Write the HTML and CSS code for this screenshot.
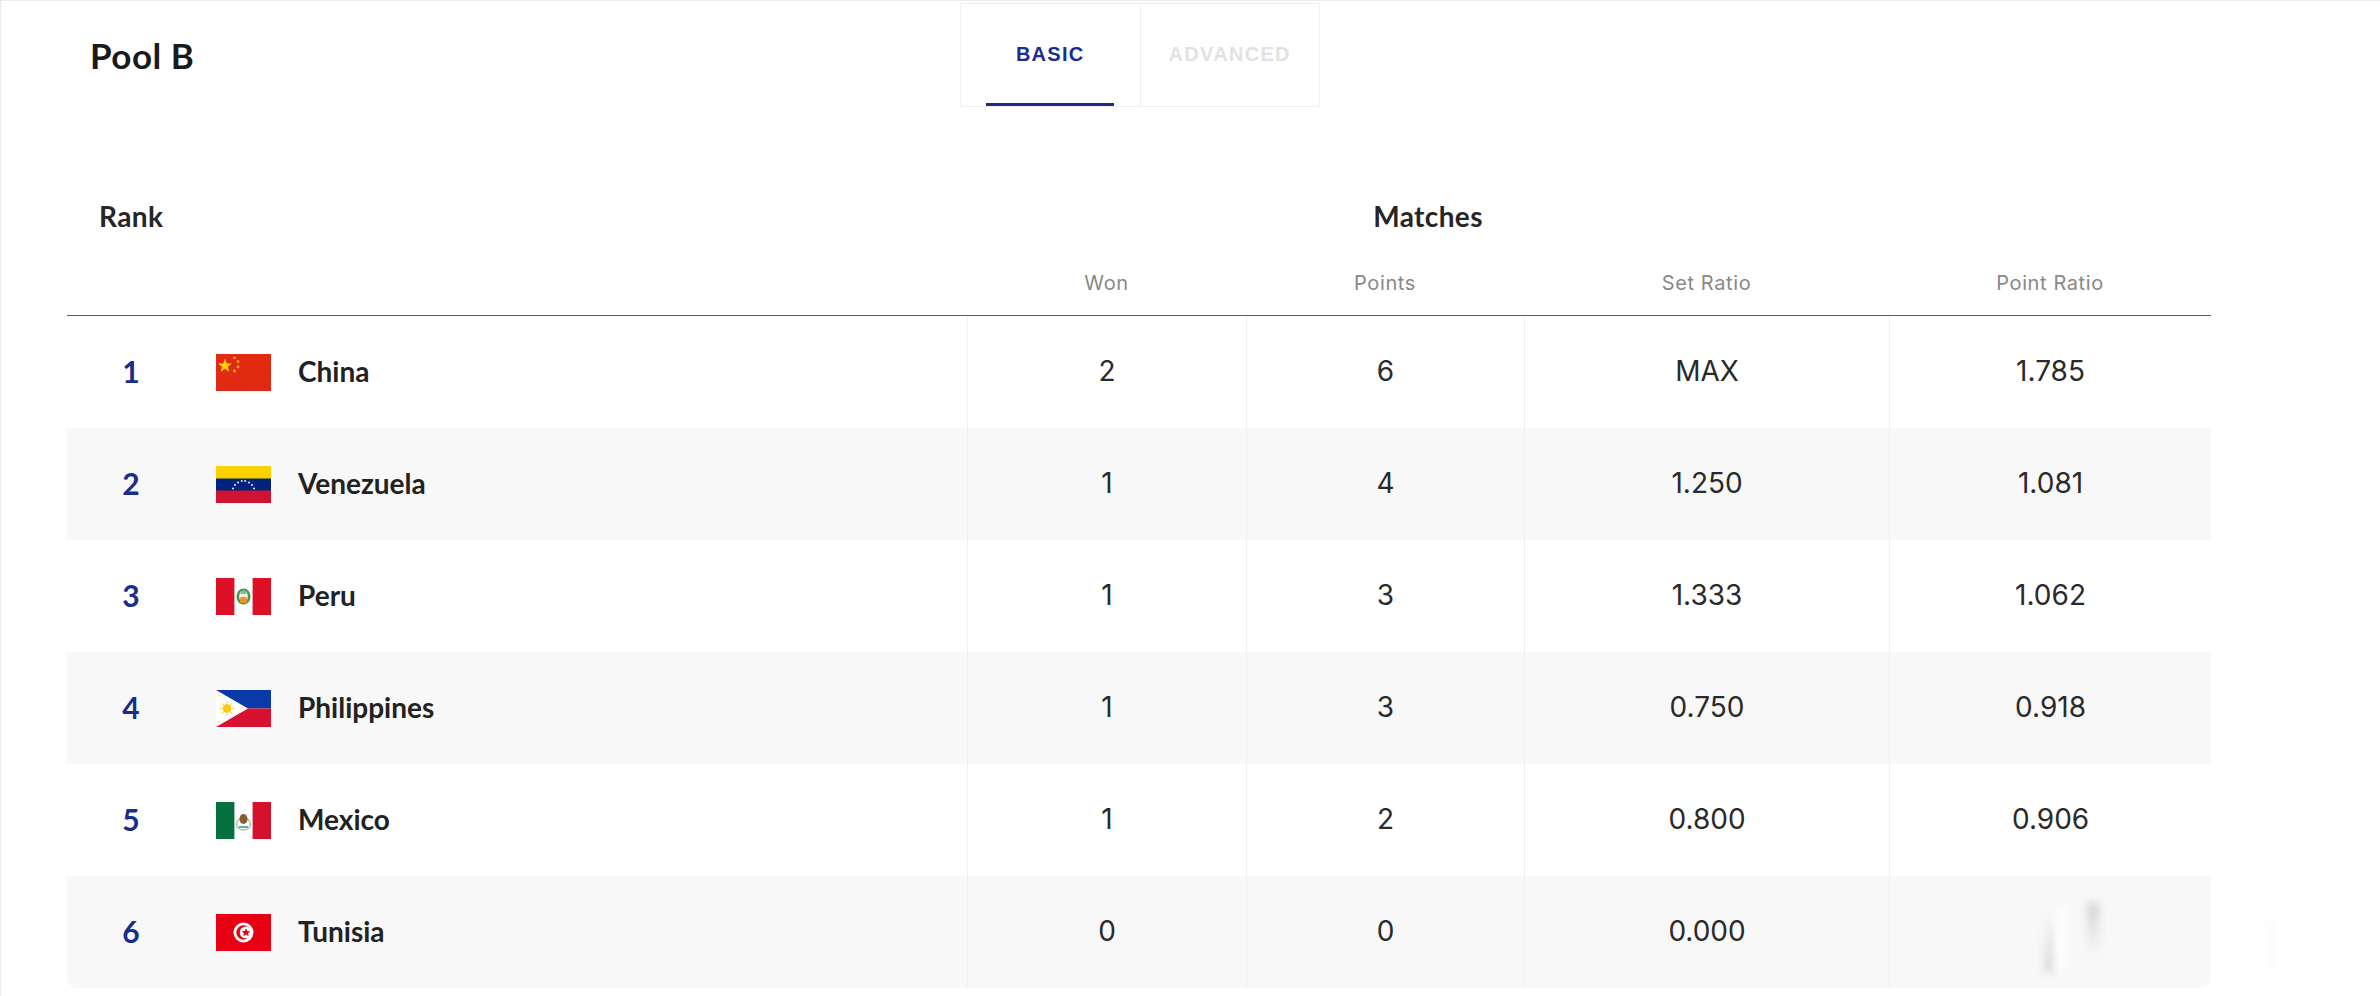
FILE: index.html
```html
<!DOCTYPE html>
<html lang="en">
<head>
    <meta charset="UTF-8">
    <meta name="viewport" content="width=device-width, initial-scale=1.0">
    <title>Pool B</title>
    <link rel="stylesheet" href="styles.css">
</head>
<body>
    <div class="page">
        <div class="top">
            <h1>Pool B</h1>
            <div class="tabs">
                <div class="tab active"><span>BASIC</span></div>
                <div class="tab"><span>ADVANCED</span></div>
            </div>
        </div>

        <table class="standings">
            <colgroup>
                <col class="col-rank">
                <col class="col-team">
                <col class="col-won">
                <col class="col-points">
                <col class="col-set">
                <col class="col-ratio">
            </colgroup>
            <thead>
                <tr class="head-main">
                    <th colspan="2" class="rank-title">Rank</th>
                    <th colspan="3">Matches</th>
                    <th></th>
                </tr>
                <tr class="head-sub">
                    <th colspan="2"></th>
                    <th>Won</th>
                    <th>Points</th>
                    <th>Set Ratio</th>
                    <th>Point Ratio</th>
                </tr>
            </thead>
            <tbody>
                <tr>
                    <td class="rank">1</td>
                    <td class="team-cell">
                        <div class="team">
                            <svg class="flag" viewBox="0 0 55 37">
                                <rect width="55" height="37" fill="#e02a12"/>
                                <polygon points="9,4.5 10.7,9.5 16,9.5 11.8,12.7 13.3,17.7 9,14.7 4.7,17.7 6.2,12.7 2,9.5 7.3,9.5" fill="#fbd400"/>
                                <circle cx="18.5" cy="3.8" r="1.4" fill="#f4a818"/>
                                <circle cx="22" cy="7.5" r="1.4" fill="#f4a818"/>
                                <circle cx="22" cy="13" r="1.4" fill="#f4a818"/>
                                <circle cx="18.5" cy="17" r="1.4" fill="#f4a818"/>
                            </svg>
                            <span>China</span>
                        </div>
                    </td>
                    <td>2</td>
                    <td>6</td>
                    <td>MAX</td>
                    <td>1.785</td>
                </tr>
                <tr>
                    <td class="rank">2</td>
                    <td class="team-cell">
                        <div class="team">
                            <svg class="flag" viewBox="0 0 55 37">
                                <rect width="55" height="13" fill="#fdd000"/>
                                <rect y="12.5" width="55" height="12.5" fill="#00247d"/>
                                <rect y="24.5" width="55" height="12.5" fill="#d01330"/>
                                <g fill="#d5d8f0">
                                    <circle cx="17" cy="22.5" r="1.1"/>
                                    <circle cx="19" cy="19" r="1.1"/>
                                    <circle cx="22" cy="16.5" r="1.1"/>
                                    <circle cx="25.8" cy="15" r="1.1"/>
                                    <circle cx="29.2" cy="15" r="1.1"/>
                                    <circle cx="33" cy="16.5" r="1.1"/>
                                    <circle cx="36" cy="19" r="1.1"/>
                                    <circle cx="38" cy="22.5" r="1.1"/>
                                </g>
                            </svg>
                            <span>Venezuela</span>
                        </div>
                    </td>
                    <td>1</td>
                    <td>4</td>
                    <td>1.250</td>
                    <td>1.081</td>
                </tr>
                <tr>
                    <td class="rank">3</td>
                    <td class="team-cell">
                        <div class="team">
                            <svg class="flag" viewBox="0 0 55 37">
                                <rect width="55" height="37" fill="#fff"/>
                                <rect width="18.4" height="37" fill="#de1028"/>
                                <rect x="36.6" width="18.4" height="37" fill="#de1028"/>
                                <ellipse cx="27.5" cy="18.5" rx="7" ry="8" fill="#3f9a55"/>
                                <ellipse cx="27.5" cy="18.5" rx="4.4" ry="6" fill="#f4f0dc"/>
                                <rect x="24" y="19" width="7" height="6" rx="1.5" fill="#e8962a"/>
                                <rect x="24.5" y="13" width="6" height="3" fill="#8cb8a0"/>
                            </svg>
                            <span>Peru</span>
                        </div>
                    </td>
                    <td>1</td>
                    <td>3</td>
                    <td>1.333</td>
                    <td>1.062</td>
                </tr>
                <tr>
                    <td class="rank">4</td>
                    <td class="team-cell">
                        <div class="team">
                            <svg class="flag" viewBox="0 0 55 37">
                                <rect width="55" height="18.5" fill="#0a3aa8"/>
                                <rect y="18.5" width="55" height="18.5" fill="#d8122e"/>
                                <polygon points="0,0 32,18.5 0,37" fill="#fff"/>
                                <g stroke="#fbd85a" stroke-width="1.2">
                                    <line x1="11" y1="11" x2="11" y2="26"/>
                                    <line x1="3.5" y1="18.5" x2="18.5" y2="18.5"/>
                                    <line x1="5.7" y1="13.2" x2="16.3" y2="23.8"/>
                                    <line x1="16.3" y1="13.2" x2="5.7" y2="23.8"/>
                                </g>
                                <circle cx="11" cy="18.5" r="4.2" fill="#fbc810"/>
                                <circle cx="3" cy="5" r="1.2" fill="#f6e79a"/>
                                <circle cx="3" cy="32" r="1.2" fill="#f6e79a"/>
                                <circle cx="26" cy="18.5" r="1" fill="#f9efc4"/>
                            </svg>
                            <span>Philippines</span>
                        </div>
                    </td>
                    <td>1</td>
                    <td>3</td>
                    <td>0.750</td>
                    <td>0.918</td>
                </tr>
                <tr>
                    <td class="rank">5</td>
                    <td class="team-cell">
                        <div class="team">
                            <svg class="flag" viewBox="0 0 55 37">
                                <rect width="55" height="37" fill="#fff"/>
                                <rect width="18.4" height="37" fill="#05703f"/>
                                <rect x="36.6" width="18.4" height="37" fill="#d4122e"/>
                                <ellipse cx="27.5" cy="22" rx="7" ry="6" fill="none" stroke="#a8c8a8" stroke-width="1.6"/>
                                <ellipse cx="27.5" cy="17" rx="4" ry="5" fill="#8a5a30"/>
                                <rect x="23" y="24" width="9" height="2" fill="#6fa8a0"/>
                            </svg>
                            <span>Mexico</span>
                        </div>
                    </td>
                    <td>1</td>
                    <td>2</td>
                    <td>0.800</td>
                    <td>0.906</td>
                </tr>
                <tr>
                    <td class="rank">6</td>
                    <td class="team-cell">
                        <div class="team">
                            <svg class="flag" viewBox="0 0 55 37">
                                <rect width="55" height="37" fill="#e70013"/>
                                <circle cx="27.5" cy="18.5" r="10" fill="#fff"/>
                                <circle cx="27.5" cy="18.5" r="7.2" fill="#e70013"/>
                                <circle cx="29.8" cy="18.5" r="6" fill="#fff"/>
                                <polygon points="30,14.2 31.2,17 34.3,17.2 32,19.2 32.7,22.2 30,20.6 27.3,22.2 28,19.2 25.7,17.2 28.8,17" fill="#e70013"/>
                            </svg>
                            <span>Tunisia</span>
                        </div>
                    </td>
                    <td>0</td>
                    <td>0</td>
                    <td>0.000</td>
                    <td></td>
                </tr>
            </tbody>
        </table>

        <!-- blurred patch over the last value -->
        <div class="smudge smudge-a"></div>
        <div class="smudge smudge-b"></div>
        <div class="smudge smudge-c"></div>
        <div class="smudge smudge-d"></div>
    </div>
</body>
</html>
```

FILE: styles.css
```css
body {
    font-family: "Inter", "Liberation Sans", sans-serif;
    background-color: #fff;
    margin: 0;
    padding: 0;
    color: #222;
}

.page {
    position: relative;
    height: 996px;
    box-sizing: border-box;
    border-top: 1px solid #ececec;
    border-left: 1px solid #ececec;
    overflow: hidden;
}

.top {
    display: grid;
    grid-template-columns: 959px auto;
    padding-top: 2px;
}

h1 {
    font-family: "Lato", sans-serif;
    font-size: 35px;
    font-weight: 700;
    color: #1a1a1a;
    margin: 0;
    padding: 32px 0 0 89px;
    line-height: 40px;
    letter-spacing: 0.5px;
}

.tabs {
    display: flex;
    width: 360px;
    height: 104px;
    box-sizing: border-box;
    border: 1px solid #efefef;
}

.tab {
    width: 179px;
    position: relative;
    text-align: center;
    padding-top: 38px;
    font-family: "Liberation Sans", sans-serif;
    font-size: 20px;
    font-weight: 700;
    letter-spacing: 1.3px;
    line-height: 24px;
    color: #e2e2e2;
    border-left: 1px solid #efefef;
}

.tab:first-child {
    border-left: none;
}

.tab.active {
    color: #1a2c8c;
}

.tab.active::after {
    content: "";
    position: absolute;
    left: 25px;
    width: 128px;
    bottom: 0;
    height: 3px;
    background-color: #1a2c8c;
}

.standings {
    margin: 76px 0 0 66px;
    width: 2144px;
    table-layout: fixed;
    border-collapse: separate;
    border-spacing: 0;
}

.col-rank { width: 128px; }
.col-team { width: 772px; }
.col-won { width: 279px; }
.col-points { width: 278px; }
.col-set { width: 365px; }
.col-ratio { width: 322px; }

th {
    padding: 0;
    font-weight: 400;
    text-align: center;
}

.head-main {
    height: 68px;
}

.head-main th {
    font-family: "Lato", sans-serif;
    font-size: 28px;
    font-weight: 700;
    color: #262626;
    letter-spacing: 0.4px;
    padding-bottom: 2px;
}

.head-main .rank-title {
    text-align: left;
    padding-left: 32px;
}

.head-sub {
    height: 65px;
}

.head-sub th {
    font-size: 20px;
    color: #888;
    letter-spacing: 0.6px;
    border-bottom: 1px solid #4a54a8;
}

td {
    height: 112px;
    padding: 0 0 2px;
    box-sizing: border-box;
    text-align: center;
    font-size: 28px;
    color: #2a2a2a;
    border-left: 1px solid #f0f0f0;
}

td:first-child,
td.team-cell {
    border-left: none;
}

td.team-cell {
    padding-bottom: 0;
}

tbody tr:nth-child(even) td {
    background-color: #f8f8f8;
}

tbody tr:last-child td:first-child {
    border-bottom-left-radius: 10px;
}

tbody tr:last-child td:last-child {
    border-bottom-right-radius: 10px;
}

td.rank {
    font-family: "Lato", sans-serif;
    font-weight: 700;
    font-size: 30px;
    color: #1a2c8c;
    padding-bottom: 3px;
}

.team {
    display: flex;
    align-items: center;
    gap: 27px;
    padding-left: 21px;
    font-family: "Lato", sans-serif;
    font-size: 28px;
    font-weight: 700;
    color: #222;
}

.team span {
    margin-bottom: 3px;
}

.flag {
    width: 55px;
    height: 37px;
    flex-shrink: 0;
}

.smudge {
    position: absolute;
    filter: blur(4px);
}

.smudge-a {
    left: 2044px;
    top: 915px;
    width: 9px;
    height: 56px;
    background: linear-gradient(to bottom, #f5f5f5, #d4d4d4);
}

.smudge-b {
    left: 2056px;
    top: 905px;
    width: 9px;
    height: 66px;
    background-color: #fefefe;
}

.smudge-c {
    left: 2086px;
    top: 902px;
    width: 12px;
    height: 50px;
    background: linear-gradient(to bottom, #d0d0d0, #f4f4f4);
}

.smudge-d {
    left: 2268px;
    top: 920px;
    width: 4px;
    height: 50px;
    background-color: #f6f6f6;
}
```
